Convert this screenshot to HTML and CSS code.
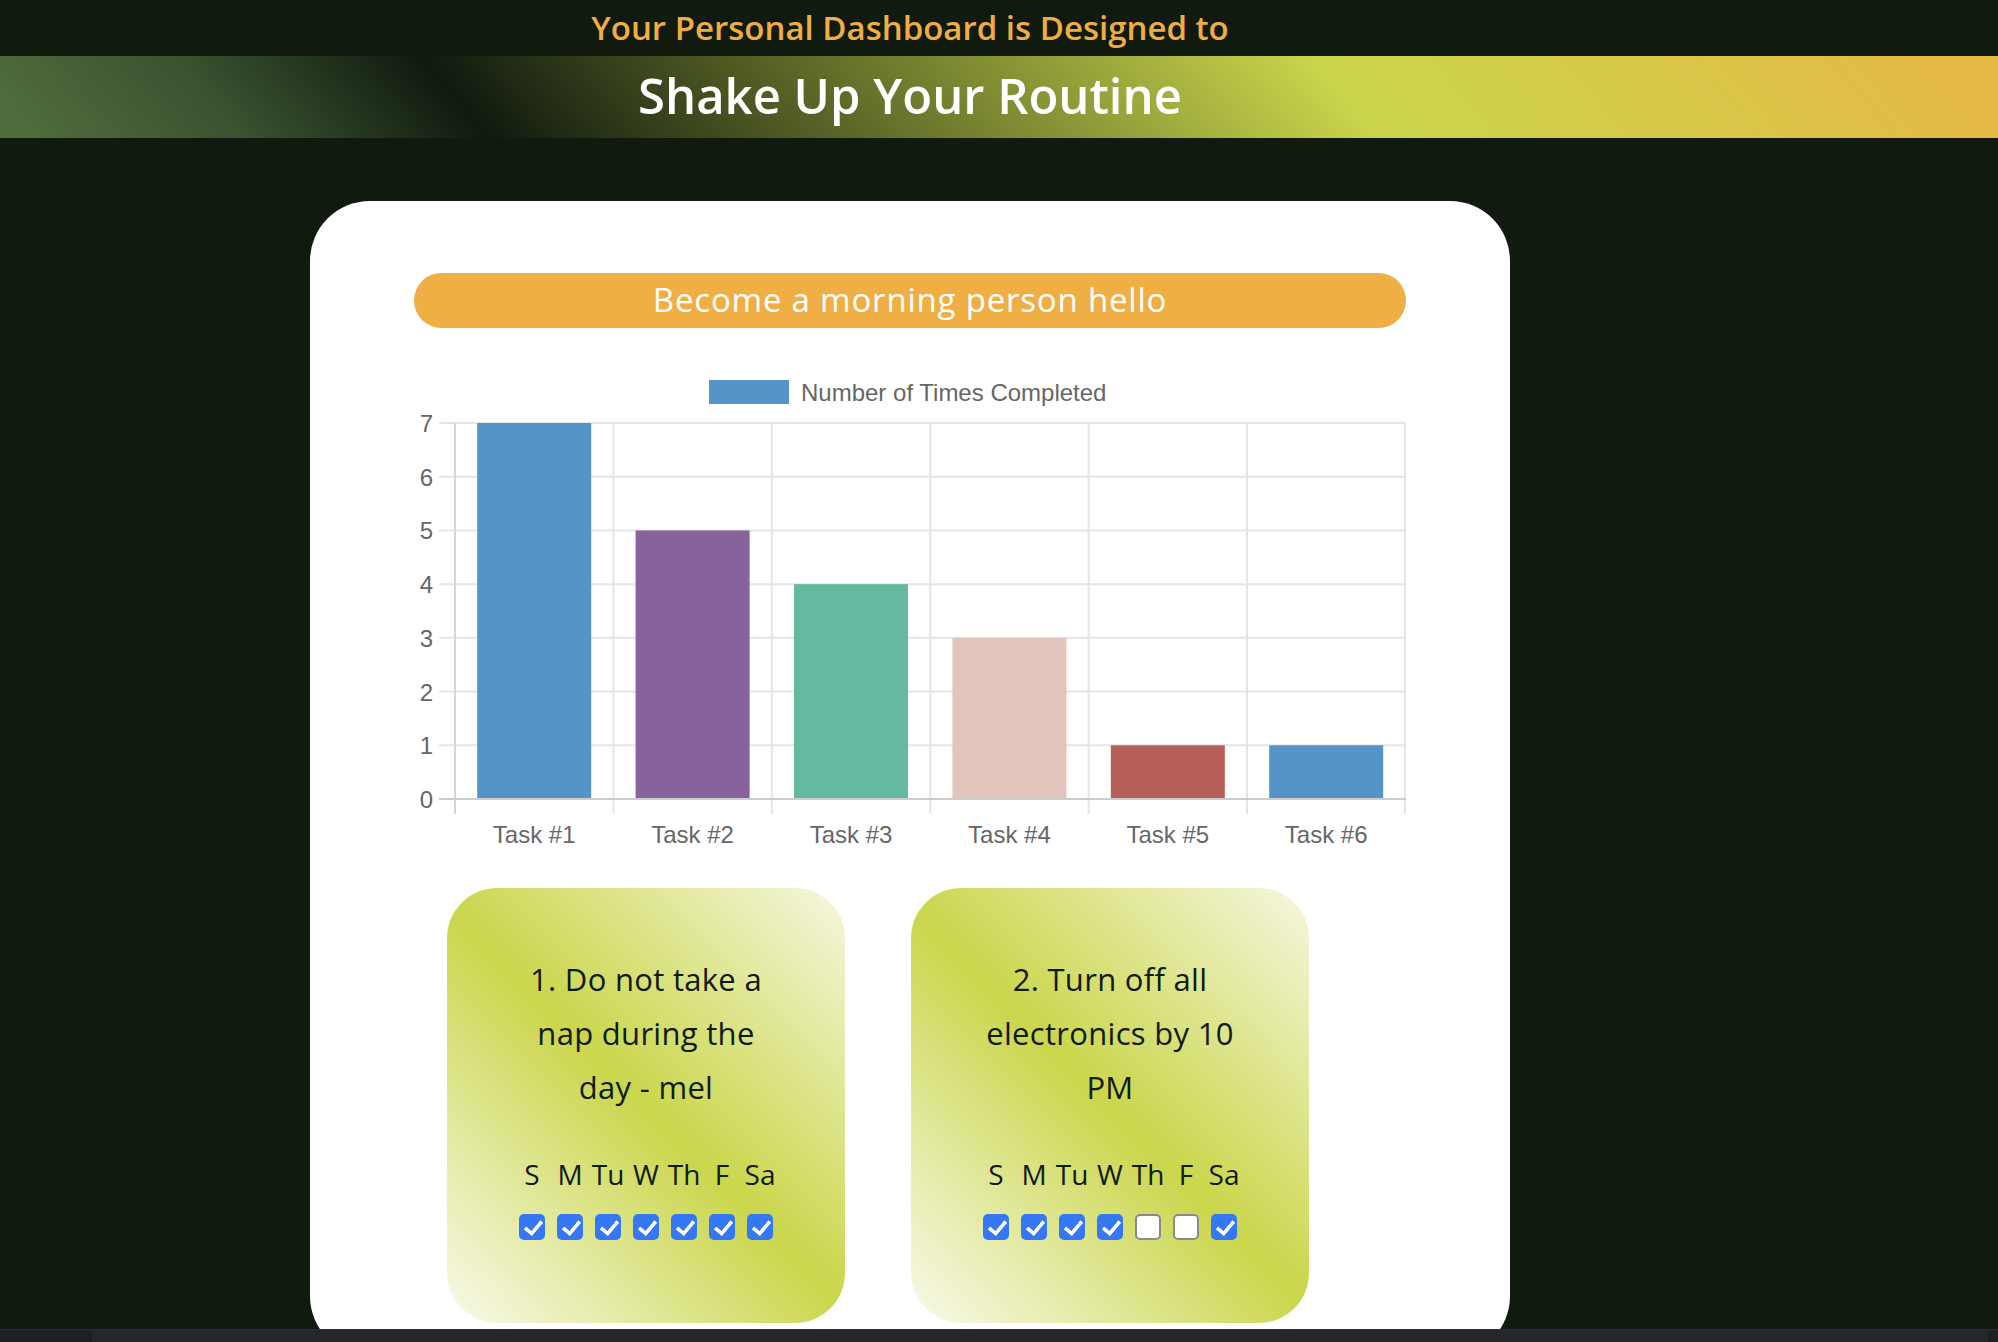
FILE: index.html
```html
<!DOCTYPE html>
<html lang="en">
<head>
<meta charset="utf-8">
<title>Personal Dashboard</title>
<link rel="stylesheet" href="styles.css">
</head>
<body>
<header class="top">
  <h2 class="tagline">Your Personal Dashboard is Designed to</h2>
  <div class="banner">
    <h1 class="banner-title">Shake Up Your Routine</h1>
  </div>
</header>

<main class="page">
  <section class="panel">
    <div class="goal-pill">Become a morning person hello</div>

    <svg class="chart" width="992" height="495" viewBox="0 0 992 495" xmlns="http://www.w3.org/2000/svg">
      <g class="legend">
        <rect x="295" y="20" width="80" height="24" fill="#5593c8"/>
        <text x="387" y="41" class="chart-label">Number of Times Completed</text>
      </g>
      <g class="grid" stroke="#e5e5e5" stroke-width="2">
        <line x1="25" y1="63" x2="992" y2="63"/>
        <line x1="25" y1="116.71" x2="992" y2="116.71"/>
        <line x1="25" y1="170.43" x2="992" y2="170.43"/>
        <line x1="25" y1="224.14" x2="992" y2="224.14"/>
        <line x1="25" y1="277.86" x2="992" y2="277.86"/>
        <line x1="25" y1="331.57" x2="992" y2="331.57"/>
        <line x1="25" y1="385.29" x2="992" y2="385.29"/>
        <line x1="199.4" y1="63" x2="199.4" y2="454"/>
        <line x1="357.8" y1="63" x2="357.8" y2="454"/>
        <line x1="516.2" y1="63" x2="516.2" y2="454"/>
        <line x1="674.6" y1="63" x2="674.6" y2="454"/>
        <line x1="833" y1="63" x2="833" y2="454"/>
        <line x1="990.9" y1="63" x2="990.9" y2="454"/>
        <line x1="41" y1="63" x2="41" y2="454" stroke="#d6d6d6"/>
      </g>
      <g class="bars">
        <rect x="63.2" y="63" width="114" height="376" fill="#5593c8"/>
        <rect x="221.6" y="170.43" width="114" height="268.57" fill="#88629c"/>
        <rect x="380" y="224.14" width="114" height="214.86" fill="#64b9a0"/>
        <rect x="538.4" y="277.86" width="114" height="161.14" fill="#e1c4bb"/>
        <rect x="696.8" y="385.29" width="114" height="53.71" fill="#b65f56"/>
        <rect x="855.2" y="385.29" width="114" height="53.71" fill="#5593c8"/>
      </g>
      <line x1="25" y1="439" x2="992" y2="439" stroke="#cccccc" stroke-width="2"/>
      <g class="y-ticks" text-anchor="end">
        <text x="19" y="448" class="chart-label">0</text>
        <text x="19" y="394.29" class="chart-label">1</text>
        <text x="19" y="340.57" class="chart-label">2</text>
        <text x="19" y="286.86" class="chart-label">3</text>
        <text x="19" y="233.14" class="chart-label">4</text>
        <text x="19" y="179.43" class="chart-label">5</text>
        <text x="19" y="125.71" class="chart-label">6</text>
        <text x="19" y="72" class="chart-label">7</text>
      </g>
      <g class="x-ticks" text-anchor="middle">
        <text x="120.2" y="483" class="chart-label">Task #1</text>
        <text x="278.6" y="483" class="chart-label">Task #2</text>
        <text x="437" y="483" class="chart-label">Task #3</text>
        <text x="595.4" y="483" class="chart-label">Task #4</text>
        <text x="753.8" y="483" class="chart-label">Task #5</text>
        <text x="912.2" y="483" class="chart-label">Task #6</text>
      </g>
    </svg>

    <div class="tasks">
      <article class="task-card">
        <p class="task-text">1. Do not take a nap during the day - mel</p>
        <div class="days">
          <label class="day"><span class="day-name">S</span><input class="check" type="checkbox" checked></label>
          <label class="day"><span class="day-name">M</span><input class="check" type="checkbox" checked></label>
          <label class="day"><span class="day-name">Tu</span><input class="check" type="checkbox" checked></label>
          <label class="day"><span class="day-name">W</span><input class="check" type="checkbox" checked></label>
          <label class="day"><span class="day-name">Th</span><input class="check" type="checkbox" checked></label>
          <label class="day"><span class="day-name">F</span><input class="check" type="checkbox" checked></label>
          <label class="day"><span class="day-name">Sa</span><input class="check" type="checkbox" checked></label>
        </div>
      </article>
      <article class="task-card">
        <p class="task-text">2. Turn off all electronics by 10 PM</p>
        <div class="days">
          <label class="day"><span class="day-name">S</span><input class="check" type="checkbox" checked></label>
          <label class="day"><span class="day-name">M</span><input class="check" type="checkbox" checked></label>
          <label class="day"><span class="day-name">Tu</span><input class="check" type="checkbox" checked></label>
          <label class="day"><span class="day-name">W</span><input class="check" type="checkbox" checked></label>
          <label class="day"><span class="day-name">Th</span><input class="check" type="checkbox"></label>
          <label class="day"><span class="day-name">F</span><input class="check" type="checkbox"></label>
          <label class="day"><span class="day-name">Sa</span><input class="check" type="checkbox" checked></label>
        </div>
      </article>
    </div>
  </section>
</main>

<div class="hscroll"><div class="hscroll-thumb"></div></div>
</body>
</html>
```

FILE: styles.css
```css
* {
  box-sizing: border-box;
}

html,
body {
  margin: 0;
  padding: 0;
}

html::-webkit-scrollbar,
body::-webkit-scrollbar {
  display: none;
}

body {
  background: #101a0f;
  font-family: "Open Sans", "Noto Sans", sans-serif;
  height: 1342px;
  overflow: hidden;
}

.tagline {
  width: 1820px;
  height: 56px;
  margin: 0;
  padding-bottom: 2px;
  display: flex;
  align-items: center;
  justify-content: center;
  color: #efae42;
  font-weight: 600;
  font-size: 33px;
}

.banner {
  height: 82px;
  background: linear-gradient(50deg, #4f6c3c 1.7%, #3a5230 12%, #101a0f 23.7%, #cad64b 67%, #e6b844 98.3%);
}

.banner-title {
  width: 1820px;
  height: 82px;
  margin: 0;
  padding-bottom: 4px;
  display: flex;
  align-items: center;
  justify-content: center;
  color: #ffffff;
  font-weight: 600;
  font-size: 49px;
}

.page {
  width: 1820px;
  padding-top: 63px;
  display: flex;
  justify-content: center;
}

.panel {
  width: 1200px;
  min-height: 1141px;
  background: #ffffff;
  border-radius: 60px;
  padding: 72px 104px 0;
}

.goal-pill {
  height: 55px;
  border-radius: 28px;
  background: #efaf44;
  color: #ffffff;
  font-size: 33px;
  letter-spacing: 0.8px;
  padding-bottom: 2px;
  display: flex;
  align-items: center;
  justify-content: center;
}

.chart {
  display: block;
  margin-top: 32px;
}

.chart-label {
  font-family: "Liberation Sans", Arial, sans-serif;
  font-size: 24px;
  fill: #666666;
}

.tasks {
  display: flex;
  flex-wrap: wrap;
}

.task-card {
  width: 398px;
  height: 435px;
  margin: 33px;
  border-radius: 50px;
  background: linear-gradient(45deg, #f9faeb 0%, #cad64b 50%, #f6f7df 100%);
  padding: 64px 60px 0;
  text-align: center;
  color: #101a0f;
}

.task-text {
  margin: 0;
  font-size: 31px;
  letter-spacing: 0.3px;
  line-height: 54px;
}

.days {
  display: flex;
  justify-content: center;
  gap: 12px;
  margin-top: 42px;
}

.day {
  display: flex;
  flex-direction: column;
  align-items: center;
  width: 26px;
}

.day-name {
  display: block;
  height: 36px;
  font-size: 28px;
  line-height: 36px;
  white-space: nowrap;
}

.check {
  appearance: none;
  -webkit-appearance: none;
  position: relative;
  width: 26px;
  height: 26px;
  margin: 22px 0 0;
  border-radius: 5px;
  background: #ffffff;
  border: 2px solid #8a8a8a;
}

.check:checked {
  background: #3478f6;
  border-color: #3478f6;
}

.check:checked::after {
  content: "";
  position: absolute;
  left: 7px;
  top: 1px;
  width: 7px;
  height: 14px;
  border-right: 4px solid #ffffff;
  border-bottom: 4px solid #ffffff;
  border-radius: 1px;
  transform: rotate(40deg);
}

.hscroll {
  position: fixed;
  left: 0;
  right: 0;
  bottom: 0;
  height: 13px;
  background: #1f2023;
  border-top: 1px solid #2a3324;
}

.hscroll-thumb {
  margin-left: 92px;
  width: 1896px;
  height: 100%;
  background: #26272b;
}
```
